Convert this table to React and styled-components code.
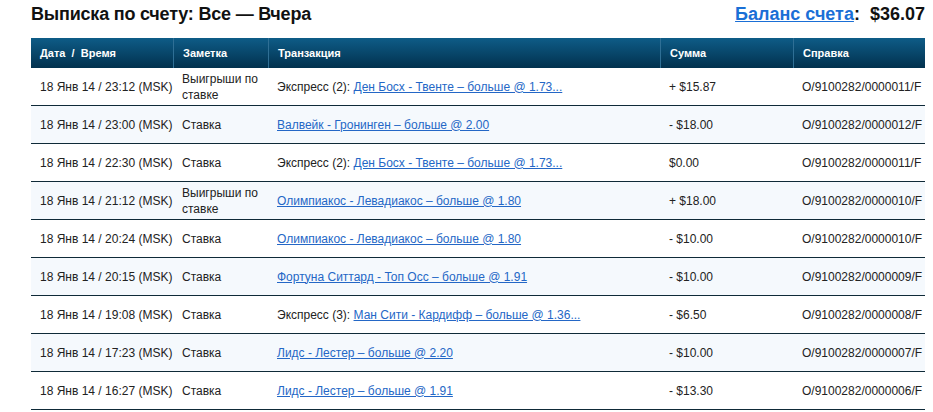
import styled, { createGlobalStyle } from 'styled-components'

const GlobalStyle = createGlobalStyle`
  html, body {
    margin: 0;
    padding: 0;
    background: #fff;
    font-family: "Liberation Sans", Arial, sans-serif;
  }
`

const Page = styled.div`
  width: 933px;
  height: 412px;
  overflow: hidden;
  padding: 0 8px 0 31px;
  box-sizing: border-box;
`

const TopBar = styled.div`
  display: flex;
  justify-content: space-between;
  align-items: center;
  height: 28px;
  width: 894px;
`

const PageTitle = styled.h1`
  margin: 0;
  font-size: 18px;
  font-weight: 700;
  color: #111;
  letter-spacing: -0.2px;
`

const Balance = styled.div`
  font-size: 18px;
  font-weight: 700;
  color: #111;
  a {
    color: #1a6fd6;
    text-decoration: underline;
  }
`

const TableWrap = styled.div`
  margin-top: 10px;
  width: 894px;
  overflow: hidden;
`

const Grid = styled.div`
  display: grid;
  grid-template-columns: 142px 95px 392px 133px 160px;
  width: 922px;
`

const HeadCell = styled.div`
  height: 30px;
  display: flex;
  align-items: center;
  padding-left: 9px;
  background: linear-gradient(#0e5c87, #02314e);
  color: #fff;
  font-size: 11px;
  font-weight: 700;
  white-space: pre;
  border-left: ${p => (p.$first ? 'none' : '1px solid #2f6f95')};
  box-sizing: border-box;
`

const Cell = styled.div`
  height: 38px;
  display: flex;
  align-items: center;
  padding-left: 9px;
  box-sizing: border-box;
  background: ${p => (p.$alt ? '#f5f9fd' : '#fff')};
  border-bottom: 1px solid #0f2a38;
  font-size: 12px;
  line-height: 16px;
  color: #222;
  white-space: ${p => (p.$wrap ? 'normal' : 'nowrap')};
  a {
    color: #2467c6;
    text-decoration: underline;
  }
`

const rows = [
  ['23:12', 'Выигрыши по ставке', 'Экспресс (2): ', 'Ден Босх - Твенте – больше @ 1.73...', '+ $15.87', '11'],
  ['23:00', 'Ставка', '', 'Валвейк - Гронинген – больше @ 2.00', '- $18.00', '12'],
  ['22:30', 'Ставка', 'Экспресс (2): ', 'Ден Босх - Твенте – больше @ 1.73...', '$0.00', '11'],
  ['21:12', 'Выигрыши по ставке', '', 'Олимпиакос - Левадиакос – больше @ 1.80', '+ $18.00', '10'],
  ['20:24', 'Ставка', '', 'Олимпиакос - Левадиакос – больше @ 1.80', '- $10.00', '10'],
  ['20:15', 'Ставка', '', 'Фортуна Ситтард - Топ Осс – больше @ 1.91', '- $10.00', '09'],
  ['19:08', 'Ставка', 'Экспресс (3): ', 'Ман Сити - Кардифф – больше @ 1.36...', '- $6.50', '08'],
  ['17:23', 'Ставка', '', 'Лидс - Лестер – больше @ 2.20', '- $10.00', '07'],
  ['16:27', 'Ставка', '', 'Лидс - Лестер – больше @ 1.91', '- $13.30', '06'],
]

const headers = ['Дата  /  Время', 'Заметка', 'Транзакция', 'Сумма', 'Справка']

export default function App() {
  return (
    <Page>
      <GlobalStyle />
      <TopBar>
        <PageTitle>Выписка по счету: Все — Вчера</PageTitle>
        <Balance>
          <a href="#">Баланс счета</a>:&nbsp; $36.07
        </Balance>
      </TopBar>
      <TableWrap>
        <Grid>
          {headers.map((h, i) => (
            <HeadCell key={h} $first={i === 0}>{h}</HeadCell>
          ))}
          {rows.map((r, i) => {
            const alt = i % 2 === 1
            return [
              <Cell key={i + 'd'} $alt={alt}>18 Янв 14 / {r[0]} (MSK)</Cell>,
              <Cell key={i + 'n'} $alt={alt} $wrap>{r[1]}</Cell>,
              <Cell key={i + 't'} $alt={alt}>
                <span>{r[2]}<a href="#">{r[3]}</a></span>
              </Cell>,
              <Cell key={i + 's'} $alt={alt}>{r[4]}</Cell>,
              <Cell key={i + 'r'} $alt={alt}>O/9100282/00000{r[5]}/F</Cell>,
            ]
          })}
        </Grid>
      </TableWrap>
    </Page>
  )
}
